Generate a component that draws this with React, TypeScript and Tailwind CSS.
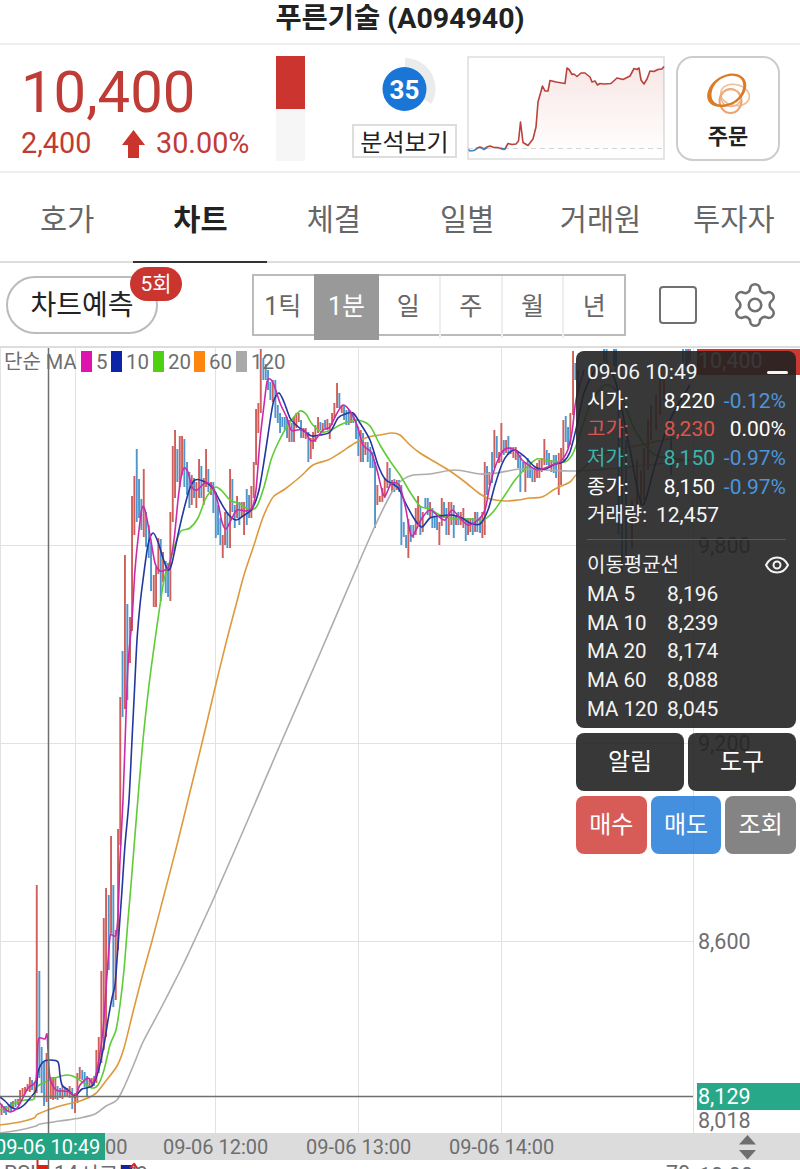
import { ReactNode } from "react";
import clsx from "clsx";
import { Settings } from "lucide-react";

type Point = [number, number];
type Candle = [x: number, high: number, low: number, up: 0 | 1];

const UP = "#cf5f5b";
const DOWN = "#4f96cd";

const tabs = ["호가", "차트", "체결", "일별", "거래원", "투자자"];
const periods = ["1틱", "1분", "일", "주", "월", "년"];

const legend = [
  { label: "5", x: 81, color: "#dd14b0" },
  { label: "10", x: 111, color: "#0b24a8" },
  { label: "20", x: 153, color: "#4fd012" },
  { label: "60", x: 194, color: "#ff860d" },
  { label: "120", x: 236, color: "#a9a9a9" },
];

const quotes = [
  { label: "시가:", value: "8,220", rate: "-0.12%", color: "text-white", rateColor: "text-[#4b95dc]" },
  { label: "고가:", value: "8,230", rate: "0.00%", color: "text-[#dc5650]", rateColor: "text-white" },
  { label: "저가:", value: "8,150", rate: "-0.97%", color: "text-[#3cb4ae]", rateColor: "text-[#4b95dc]" },
  { label: "종가:", value: "8,150", rate: "-0.97%", color: "text-white", rateColor: "text-[#4b95dc]" },
];

const averages = [
  ["MA 5", "8,196"],
  ["MA 10", "8,239"],
  ["MA 20", "8,174"],
  ["MA 60", "8,088"],
  ["MA 120", "8,045"],
];

const candles: Candle[] = [
  [1.5, 1104, 1115, 1], [4, 1106, 1113, 0], [6, 1106, 1115, 0], [8.5, 1104, 1112, 1], [11, 1102, 1111, 0],
  [13, 1101, 1108, 1], [15.5, 1099, 1107, 0], [18, 1099, 1105, 1], [20, 1090, 1103, 1], [22.5, 1088, 1097, 1],
  [25, 1087, 1093, 1], [27.5, 1084, 1091, 1], [29.8, 1077, 1092, 1], [32, 1080, 1090, 0], [34.5, 1082, 1092, 1],
  [36.7, 885, 1093, 1], [39.3, 971, 1078, 0], [41.6, 1047, 1093, 0], [44, 1062, 1106, 0], [46.5, 1053, 1102, 1],
  [50.7, 1077, 1099, 1], [53, 1077, 1100, 1], [55.3, 1077, 1099, 1], [57.5, 1086, 1100, 0], [60, 1088, 1098, 0],
  [62.4, 1086, 1099, 1], [64.8, 1087, 1096, 0], [67.2, 1088, 1097, 1], [69.6, 1086, 1098, 1], [72.2, 1088, 1109, 0],
  [75, 1093, 1113, 1], [77.3, 1073, 1103, 1], [79.7, 1067, 1079, 1], [82.2, 1070, 1080, 0], [84.6, 1072, 1087, 0],
  [87, 1076, 1096, 0], [89.4, 1078, 1088, 1], [91.7, 1078, 1087, 1], [94, 1076, 1086, 0], [96.3, 1050, 1083, 1],
  [98.7, 1037, 1073, 1], [101.3, 971, 1063, 1], [103.7, 918, 1050, 1], [106, 888, 1037, 1], [108.7, 895, 970, 0],
  [111, 836, 933, 1], [113.3, 885, 1007, 0], [115.7, 930, 1000, 1], [118, 829, 950, 1], [120.2, 697, 845, 1],
  [122.5, 651, 717, 0], [124.9, 555, 709, 1], [127.3, 604, 700, 0], [130, 617, 663, 1], [132, 496, 631, 1],
  [134.3, 476, 535, 1], [136.7, 449, 522, 0], [139, 479, 518, 0], [141.3, 499, 530, 0], [143.7, 469, 537, 1],
  [146, 512, 547, 0], [148.7, 525, 558, 0], [151, 542, 591, 0], [153.7, 575, 607, 1], [156, 567, 607, 1],
  [158.3, 538, 574, 1], [160.7, 539, 601, 0], [163, 552, 582, 1], [165.7, 561, 593, 0], [168, 563, 597, 0],
  [170.3, 512, 601, 1], [172.7, 446, 522, 1], [175, 430, 498, 1], [177.3, 449, 482, 0], [179.7, 436, 487, 1],
  [182, 436, 475, 1], [184.3, 439, 487, 0], [187, 462, 495, 0], [189.3, 472, 508, 0], [191.7, 475, 505, 1],
  [194, 478, 498, 0], [196.3, 482, 508, 1], [199, 459, 498, 1], [201.3, 466, 498, 0], [203.7, 478, 505, 1],
  [206, 449, 487, 1], [208.3, 469, 492, 0], [211, 482, 495, 1], [213.3, 482, 513, 0], [215.7, 492, 538, 0],
  [218, 505, 535, 0], [220.3, 518, 545, 0], [222.7, 535, 558, 1], [225, 512, 545, 1], [227.3, 512, 548, 0],
  [230, 469, 548, 1], [232.3, 479, 512, 0], [234.7, 505, 528, 0], [237, 496, 518, 1], [239.3, 502, 525, 0],
  [241.7, 502, 517, 1], [244, 502, 535, 1], [246.7, 489, 525, 0], [249, 495, 518, 0], [251.3, 486, 518, 1],
  [253.7, 462, 498, 1], [256, 409, 465, 1], [258.3, 403, 433, 1], [260.7, 349, 413, 1], [263.3, 358, 380, 0],
  [265.7, 364, 380, 0], [268, 370, 390, 0], [270.3, 382, 400, 0], [272.7, 380, 402, 1], [275.3, 380, 418, 0],
  [277.7, 405, 423, 0], [280, 413, 433, 0], [282.3, 417, 427, 0], [284.7, 417, 430, 0], [287, 417, 438, 0],
  [289.3, 420, 442, 1], [291.7, 423, 442, 0], [294, 417, 442, 1], [296.3, 413, 428, 1], [298.7, 413, 422, 1],
  [301, 420, 438, 0], [303.3, 428, 438, 1], [305.7, 428, 439, 1], [308.3, 432, 462, 0], [310.7, 438, 459, 1],
  [313, 432, 449, 1], [315.3, 425, 442, 1], [318, 417, 433, 1], [320.3, 422, 430, 0], [322.7, 423, 432, 1],
  [325, 420, 428, 0], [327.3, 419, 430, 1], [329.7, 423, 439, 1], [332, 413, 425, 1], [334.3, 403, 418, 1],
  [337, 383, 408, 1], [339.3, 393, 408, 0], [341.7, 405, 413, 1], [344, 405, 420, 0], [346.3, 410, 425, 0],
  [348.7, 410, 425, 0], [351, 413, 423, 1], [353.3, 413, 423, 0], [356, 420, 439, 0], [358.3, 427, 456, 0],
  [360.7, 430, 462, 1], [363, 433, 462, 0], [365.3, 442, 455, 1], [367.7, 442, 462, 0], [370.3, 447, 468, 0],
  [372.7, 452, 468, 0], [375, 462, 528, 0], [377.3, 485, 505, 1], [379.7, 496, 502, 1], [382.3, 488, 502, 1],
  [384.7, 478, 498, 1], [387.3, 462, 488, 1], [389.7, 468, 485, 0], [392, 480, 492, 1], [394.3, 479, 492, 0],
  [396.7, 480, 490, 1], [399, 480, 492, 0], [401.3, 485, 545, 0], [403.7, 522, 537, 0], [406, 535, 548, 0],
  [408.3, 519, 558, 1], [410.7, 525, 542, 0], [413.3, 525, 538, 0], [415.7, 508, 535, 1], [418, 496, 525, 1],
  [420.3, 506, 535, 0], [422.7, 512, 532, 1], [425.3, 498, 508, 0], [427.7, 498, 515, 0], [430, 502, 517, 1],
  [432.3, 508, 528, 0], [434.7, 517, 528, 0], [437, 515, 530, 0], [439.3, 522, 545, 1], [441.7, 498, 526, 1],
  [444, 502, 518, 0], [446.3, 508, 535, 0], [448.7, 502, 535, 1], [451.3, 502, 525, 1], [453.7, 505, 538, 0],
  [456, 515, 525, 1], [458.3, 512, 525, 0], [460.7, 512, 525, 1], [463.3, 508, 528, 1], [465.7, 518, 541, 0],
  [468, 518, 535, 1], [470.3, 518, 532, 1], [472.7, 518, 535, 0], [475, 512, 532, 1], [477.3, 512, 532, 0],
  [480, 518, 533, 0], [482.3, 512, 538, 1], [484.7, 462, 535, 1], [487, 466, 495, 0], [489.3, 472, 485, 1],
  [492, 452, 483, 0], [494.3, 430, 468, 1], [496.7, 436, 458, 0], [499, 452, 463, 1], [501.3, 423, 462, 1],
  [503.7, 440, 455, 0], [506, 440, 453, 1], [508.3, 436, 455, 0], [510.7, 447, 454, 0], [513.3, 447, 458, 1],
  [515.7, 447, 460, 1], [518, 452, 468, 0], [520.3, 455, 492, 0], [523, 462, 472, 0], [525.3, 462, 492, 1],
  [527.7, 458, 478, 0], [530, 463, 478, 0], [532.3, 468, 482, 0], [534.7, 468, 482, 1], [537, 463, 478, 1],
  [539.3, 460, 478, 1], [541.7, 458, 472, 1], [544.3, 439, 465, 1], [546.7, 450, 465, 0], [549, 453, 468, 0],
  [551.3, 460, 472, 1], [553.7, 455, 473, 0], [556, 455, 478, 0], [558.7, 453, 495, 1], [561, 448, 485, 1],
  [563.3, 420, 462, 1], [565.7, 416, 442, 0], [568, 427, 448, 0], [570.3, 413, 445, 1], [573, 351, 415, 1],
  [575.3, 363, 380, 0], [578, 370, 392, 0], [604, 349, 362, 0], [606.5, 349, 364, 0], [614, 349, 366, 0],
  [616, 349, 372, 0], [618.5, 400, 535, 0], [622, 420, 572, 0], [626, 440, 560, 0], [632, 500, 548, 1],
  [637, 460, 512, 1], [641, 470, 505, 1], [644, 448, 500, 1], [648, 420, 470, 1], [651, 405, 440, 1],
  [656, 395, 430, 1], [660, 375, 415, 1], [664, 380, 400, 1], [671, 420, 475, 0], [683, 349, 362, 0],
  [686, 349, 366, 0], [688, 349, 370, 1], [690, 349, 362, 0],
];

const ma5: Point[] = [
  [0, 1103], [4, 1108], [10, 1112], [18, 1107], [28, 1088], [36, 1080], [38, 1042], [41, 1038], [45, 1039], [47, 1034],
  [48, 1050], [50, 1078], [56, 1090], [63, 1091], [70, 1092], [75, 1097], [80, 1085], [88, 1078], [93, 1083], [98, 1065],
  [103, 1030], [107, 975], [110, 937], [112, 935], [116, 935], [118, 915], [120, 860], [123, 800], [125.5, 730], [128, 665],
  [132, 620], [135, 570], [139, 530], [142, 508], [145, 510], [150, 535], [155, 563], [160, 571], [165, 570], [169, 566],
  [174, 540], [178, 500], [181, 478], [184, 468], [188, 472], [192, 487], [197, 490], [205, 483], [212, 486], [218, 503],
  [222, 522], [226, 529], [231, 520], [237, 510], [245, 511], [252, 508], [256, 490], [260, 440], [264, 405], [267, 382],
  [270, 379], [274, 385], [280, 403], [287, 418], [291, 430], [297, 430], [304, 430], [310, 440], [315, 440], [323, 430],
  [330, 427], [336, 415], [343, 405], [350, 411], [357, 425], [363, 445], [371, 452], [377, 470], [384, 496], [391, 484],
  [399, 485], [405, 505], [411, 535], [416, 530], [422, 518], [430, 510], [438, 516], [445, 520], [452, 510], [460, 518],
  [468, 525], [478, 520], [485, 510], [490, 485], [497, 462], [505, 449], [515, 450], [522, 460], [530, 466], [537, 470],
  [545, 468], [555, 464], [560, 462], [567, 452], [572, 432], [576, 400], [584, 370],
];

const ma10: Point[] = [
  [0, 1097], [5, 1101], [11, 1107], [17, 1109], [24, 1105], [31, 1097], [36, 1090], [38, 1072], [43, 1062], [50, 1060],
  [58, 1062], [60, 1075], [62, 1085], [68, 1090], [75, 1096], [82, 1089], [92, 1086], [98, 1072], [104, 1045], [108, 1020],
  [112, 998], [115, 985], [117, 960], [119.5, 925], [122, 890], [125, 845], [129, 800], [132, 740], [134.5, 690], [137, 640],
  [140, 605], [143, 580], [148, 545], [153, 533], [158, 542], [163, 558], [168, 570], [172, 563], [179, 530], [185, 505],
  [190, 488], [195, 480], [203, 481], [212, 487], [220, 501], [228, 514], [236, 520], [243, 516], [252, 509], [259, 490],
  [265, 455], [271, 415], [274, 400], [279, 393], [284, 402], [290, 418], [296, 425], [304, 431], [312, 436], [320, 435],
  [330, 432], [338, 418], [345, 414], [353, 413], [360, 423], [370, 440], [378, 465], [385, 479], [393, 484], [399, 489],
  [406, 504], [415, 520], [422, 527], [430, 518], [440, 516], [452, 515], [462, 518], [470, 523], [480, 524], [488, 510],
  [495, 485], [502, 464], [508, 454], [515, 450], [525, 457], [535, 467], [545, 469], [555, 464], [563, 462], [570, 452],
  [577, 425], [585, 390], [600, 365], [615, 380], [630, 450], [642, 505], [655, 465], [670, 420], [690, 385],
];

const ma20: Point[] = [
  [0, 1110], [10, 1107], [15, 1103], [25, 1100], [34, 1099], [36, 1088], [43, 1083], [55, 1078], [67, 1075], [75, 1077],
  [85, 1084], [92, 1088], [98, 1085], [104, 1070], [110, 1045], [116, 1030], [120, 1005], [124, 970], [128, 920], [131, 885],
  [137, 810], [143, 740], [149, 685], [155, 640], [160, 605], [164, 580], [169, 564], [176, 542], [181, 531], [190, 528],
  [198, 518], [205, 500], [210, 492], [216, 487], [222, 491], [230, 500], [240, 504], [250, 510], [257, 506], [264, 487],
  [271, 460], [278, 443], [286, 428], [293, 418], [300, 411], [306, 414], [312, 424], [322, 432], [331, 430], [340, 425],
  [348, 422], [358, 420], [370, 426], [380, 445], [390, 461], [400, 475], [410, 492], [420, 506], [430, 509], [440, 515],
  [455, 519], [470, 519], [483, 520], [493, 512], [505, 495], [515, 480], [525, 469], [537, 459], [550, 461], [565, 462],
  [572, 455], [577, 443], [590, 405], [605, 385], [620, 395], [635, 430], [655, 455], [690, 460],
];

const ma60: Point[] = [
  [0, 1125], [20, 1122], [34, 1118], [38, 1114], [60, 1106], [80, 1101], [95, 1094], [105, 1082], [117, 1066], [124, 1048],
  [133, 1012], [142, 977], [152, 941], [163, 899], [177, 845], [188, 800], [202, 743], [215, 688], [226, 643], [236, 605],
  [244, 575], [254, 545], [262, 520], [268, 506], [274, 496], [285, 489], [300, 477], [313, 465], [328, 460],
  [340, 453], [355, 443], [368, 437], [380, 435], [392, 433], [400, 435], [410, 445], [420, 453], [435, 462], [450, 471],
  [465, 482], [480, 494], [490, 499], [505, 501], [518, 500], [530, 498], [542, 497], [555, 489], [570, 482], [577, 474],
  [600, 455], [640, 445], [690, 435],
];

const ma120: Point[] = [
  [0, 1133], [20, 1130], [36, 1126], [40, 1124], [60, 1121], [80, 1118], [95, 1114], [106, 1106], [117, 1100], [125, 1085],
  [134, 1064], [143, 1042], [160, 1010], [180, 971], [190, 950], [213, 900], [247, 822], [280, 745], [318, 658], [354, 574],
  [375, 526], [392, 492], [402, 480], [413, 475], [430, 474], [455, 470], [480, 474], [497, 473], [520, 469], [545, 470],
  [575, 471], [620, 468], [690, 460],
];

const lines = [
  { points: ma120, color: "#adadad" },
  { points: ma60, color: "#dd9a3c" },
  { points: ma20, color: "#5fcb35" },
  { points: ma10, color: "#22379f" },
  { points: ma5, color: "#cb2bab" },
];

// Catmull-Rom spline through all points
const smooth = (p: Point[]) =>
  p.reduce((d, [x, y], i) => {
    if (i === 0) return `M${x} ${y}`;
    const a = p[i - 2] ?? p[i - 1];
    const b = p[i - 1];
    const c = p[i + 1] ?? p[i];
    return `${d}C${b[0] + (x - a[0]) / 7} ${b[1] + (y - a[1]) / 7} ${x - (c[0] - b[0]) / 7} ${y - (c[1] - b[1]) / 7} ${x} ${y}`;
  }, "");

const ScoreGauge = () => (
  <svg width="64" height="62" viewBox="0 0 64 62">
    <path d="M32 5.500A26 26 0 0 1 54.500 44.500" fill="none" stroke="#ebebeb" strokeWidth="9" />
    <circle cx="31.500" cy="32" r="22" fill="#1976d7" />
    <text x="31.500" y="42" textAnchor="middle" fontSize="26" fontWeight="700" fill="#fff">
      35
    </text>
  </svg>
);

const Sparkline = () => (
  <svg width="198" height="104" viewBox="467 56 198 104">
    <defs>
      <linearGradient id="spark" x1="0" y1="0" x2="0" y2="1">
        <stop offset="0" stopColor="#c0392f" stopOpacity="0.12" />
        <stop offset="1" stopColor="#c0392f" stopOpacity="0.01" />
      </linearGradient>
    </defs>
    <rect x="468" y="57" width="196" height="102" fill="#fff" stroke="#ddd" strokeWidth="1.500" />
    <path
      d="M505 149L508 143L519 143L520.500 122L523 142L528 145L533 139L536 127L538 102L542.500 86L545 91H548L551 81L565 83.500L567 68L572 74L577 76L583 72L588 75L593 82L598 85L610 83L618 78L625 79L631 74L634 69L639 68L641 80L644 84L650 72L654 69L661 68L664 66V149Z"
      fill="url(#spark)"
    />
    <path d="M468 148.500H664" stroke="#d5d5d5" strokeDasharray="5 4" />
    <path
      d="M476 148.500L480 147L484 149L487 147L490 146L494 147.500L498 147.500L502 149L505 149L508 143.500L512 144.500L516 144L518.500 141L520.500 122L523 142.500L528 145.500L533 139L536 127L538 102L542.500 86L545 91H548L550 80.500L556 82L565 83.500L567 68L569 69.500L572 74.500L574 74L577 76.500L581 73L585 73L590 77L592 82L595 81L597.500 85L600 83.500L604 84L611 83.500L617 78L623 79.500L630 76L634 68.500L637 69.500L639 68L641 80L644 84L647 79L650 71L654 71.500L658 69.500L662 69L664 66.500"
      fill="none"
      stroke="#b9423c"
      strokeWidth="1.600"
      strokeLinejoin="round"
    />
    <path
      d="M468.500 149.500L470 151L474 150.500L477 148.500M481 147.500L484 149.500L487 147.500M501 148L504 149.500L506 147.500"
      fill="none"
      stroke="#3e84bd"
      strokeWidth="1.600"
    />
  </svg>
);

const OrderLogo = () => (
  <svg width="46" height="42" viewBox="0 0 46 42">
    <g fill="none">
      <ellipse cx="30" cy="22" rx="14.500" ry="10.500" stroke="#f0bd97" strokeWidth="1.600" transform="rotate(12 30 22)" />
      <ellipse cx="25.500" cy="28" rx="11" ry="12" stroke="#eaa473" strokeWidth="2" />
      <ellipse cx="26" cy="25" rx="10" ry="8.500" stroke="#efb084" strokeWidth="1.400" />
    </g>
    <path
      fillRule="evenodd"
      fill="#dc7b27"
      d="M23 1C34-1 43 5 41 15C39 26 28 34 16 34C5 34 0 27 3 18C6 9 14 3 23 1ZM25 3C16 4 9 10 7 18C5 26 9 31.500 17 31.500C27 31.500 36 25 38 15C39.500 7 34 2 25 3Z"
    />
  </svg>
);

const PriceChart = () => (
  <svg className="block" width="800" height="821" viewBox="0 348 800 821" fontSize="21.500" fill="#6e6e6e">
    <g stroke="#e2e2e2">
      {[0.5, 75.5, 215.5, 358.5, 501.5, 693.5].map((x) => (
        <path key={x} d={`M${x} 348V1133`} />
      ))}
      {[545.5, 743.5, 941.5].map((y) => (
        <path key={y} d={`M0 ${y}H693`} />
      ))}
    </g>

    {candles.map(([x, high, low, up]) => (
      <rect key={x} x={x - 0.9} y={high} width="1.900" height={low - high} fill={up ? UP : DOWN} />
    ))}
    {lines.map(({ points, color }) => (
      <path key={color} d={smooth(points)} fill="none" stroke={color} strokeWidth="1.600" />
    ))}

    <g fontSize="20">
      <text x="4" y="369">단순 MA</text>
      {legend.map(({ label, x, color }) => (
        <g key={label}>
          <rect x={x} y="351" width="11" height="21" fill={color} />
          <text x={x + 15} y="369" fontSize="20.500">{label}</text>
        </g>
      ))}
    </g>

    <text x="698" y="553">9,800</text>
    <text x="698" y="751">9,200</text>
    <text x="698" y="949">8,600</text>
    <text x="698" y="1128">8,018</text>
    <rect x="697" y="349" width="103" height="26" fill="#cb3a34" />
    <text x="698" y="368" fill="#fff">10,400</text>

    <rect y="1133" width="800" height="27" fill="#dcdcdc" />
    <g fontSize="20">
      <text x="105" y="1154">00</text>
      <text x="163" y="1154">09-06 12:00</text>
      <text x="306" y="1154">09-06 13:00</text>
      <text x="449" y="1154">09-06 14:00</text>
    </g>
    <path d="M739 1144.500L747.500 1135L756 1144.500ZM739 1150L747.500 1159.500L756 1150Z" />

    {/* next indicator pane, only its first pixels are in view */}
    <text x="4" y="1181">RSI</text>
    <rect x="38" y="1165" width="11" height="4" fill="#e0200f" />
    <path d="M37.500 1160V1169" stroke="#cf2a20" strokeWidth="2" />
    <text x="54" y="1181">14</text>
    <text x="79" y="1182">시그널</text>
    <rect x="121" y="1165" width="11" height="4" fill="#0b24a8" />
    <path d="M130 1168L134 1164L138 1169" fill="none" stroke="#d0242f" strokeWidth="2" />
    <text x="136" y="1182">9</text>
    <text x="666" y="1181">70</text>
    <text x="699" y="1183">10.00</text>

    <g stroke="#6f6f6f" strokeWidth="1.500">
      <path d="M48.500 348V1169" />
      <path d="M0 1096.500H693" />
    </g>
    <rect x="697" y="1083" width="103" height="27" fill="#27a889" />
    <text x="698" y="1104" fill="#fff">8,129</text>
    <rect y="1133" width="105" height="27" fill="#24a485" />
    <text x="-5" y="1154" fontSize="20" fill="#fff">09-06 10:49</text>
  </svg>
);

const PanelButton = ({ children, className }: { children: ReactNode; className: string }) => (
  <button className={clsx("flex h-[58px] flex-1 items-center justify-center rounded-lg text-2xl text-white", className)}>
    {children}
  </button>
);

const InfoPanel = () => (
  <div className="absolute top-[3px] right-1 flex w-[220px] flex-col gap-[5px]">
    <div className="h-[377px] rounded-lg bg-[#222]/90 pt-[7px] pr-[10px] pl-[11px] text-[21px] leading-[28.7px] text-[#f4f4f4]">
      <div className="flex items-center justify-between">
        <span>09-06 10:49</span>
        <span className="-mr-[2px] h-[3px] w-[21px] rounded-full bg-[#f4f4f4]" />
      </div>
      {quotes.map(({ label, value, rate, color, rateColor }) => (
        <div key={label} className="flex h-[28.7px]">
          <span className={clsx("w-[59px] text-xl leading-[28.7px]", color)}>{label}</span>
          <span className={clsx("w-[69px] text-right", color)}>{value}</span>
          <span className={clsx("flex-1 text-right", rateColor)}>{rate}</span>
        </div>
      ))}
      <div className="flex h-[28.7px]">
        <span className="w-[69px] text-xl leading-[28.7px]">거래량:</span>
        <span>12,457</span>
      </div>
      <div className="mt-[9px] mb-[11px] h-px bg-[#5a5a5a]" />
      <div className="flex h-[28.7px] items-center justify-between">
        <span className="text-xl leading-[28.7px]">이동평균선</span>
        <svg className="-mr-1" width="26" height="20" viewBox="0 0 26 20" fill="none" stroke="#f4f4f4" strokeWidth="2">
          <path d="M2 10C7 0 19 0 24 10C19 20 7 20 2 10Z" />
          <circle cx="13" cy="10" r="3.500" />
        </svg>
      </div>
      {averages.map(([label, value]) => (
        <div key={label} className="flex h-[28.7px]">
          <span className="w-20 text-[20.5px] leading-[28.7px]">{label}</span>
          <span>{value}</span>
        </div>
      ))}
    </div>
    <div className="flex gap-1">
      <PanelButton className="bg-[#222]/90">알림</PanelButton>
      <PanelButton className="bg-[#222]/90">도구</PanelButton>
    </div>
    <div className="flex gap-1">
      <PanelButton className="bg-[#cd332d]/80">매수</PanelButton>
      <PanelButton className="bg-[#1573d6]/80">매도</PanelButton>
      <PanelButton className="bg-[#656565]/80">조회</PanelButton>
    </div>
  </div>
);

export default function App() {
  return (
    <div className="h-[1169px] w-[800px] overflow-hidden bg-white font-['Roboto','Noto_Sans_CJK_KR',sans-serif] text-[#222]">
      <header className="flex h-[45px] justify-center border-b-2 border-[#eee]">
        <h1 className="text-[28.5px] leading-[38px] font-bold">푸른기술 (A094940)</h1>
      </header>

      <section className="flex h-32 border-b-2 border-[#eee]">
        <div className="w-[276px] pl-[21px] text-[#bf3b36]">
          <div className="mt-[15px] text-[58px] leading-[64px]">10,400</div>
          <div className="flex items-center text-[28.8px] leading-[39px]">
            <span className="w-[100px]">2,400</span>
            <svg width="25" height="28" viewBox="0 0 25 28" fill="#cb332d">
              <path d="M12.500 0L24 15H18V28H7V15H1Z" />
            </svg>
            <span className="ml-[10px]">30.00%</span>
          </div>
        </div>
        <div className="mt-[11px] h-[105px] w-[29px] bg-[#f6f6f6]">
          <div className="h-[53px] bg-[#cc352f]" />
        </div>
        <div className="ml-[47px] flex w-[105px] flex-col items-center pt-[12px]">
          <ScoreGauge />
          <div className="mt-[5px] h-[34px] w-[105px] border-2 border-[#ddd] text-center text-2xl leading-[35px] whitespace-nowrap">
            분석보기
          </div>
        </div>
        <div className="mt-[11px] ml-[10px]">
          <Sparkline />
        </div>
        <button className="mt-[11px] ml-[11px] flex h-[105px] w-[104px] flex-col items-center rounded-[17px] border-2 border-[#ccc] pt-[15px]">
          <OrderLogo />
          <span className="mt-[5px] text-[22px] leading-[34px] font-bold">주문</span>
        </button>
      </section>

      <nav className="grid h-[90px] grid-cols-6 border-b-2 border-[#ddd]">
        {tabs.map((tab) => (
          <div
            key={tab}
            className={clsx(
              "-mb-[2px] pt-[25px] pl-[1px] text-center text-[29.5px] leading-[44px]",
              tab === "차트" ? "border-b-2 border-[#333] font-bold" : "text-[#666]",
            )}
          >
            {tab}
          </div>
        ))}
      </nav>

      <div className="flex h-[85px] items-start border-b-2 border-[#ddd]">
        <div className="relative mt-[13px] ml-[6px] h-[58px] w-[152px] rounded-full border-2 border-[#bbb] text-center text-[28px] leading-[56px]">
          차트예측
          <span className="absolute -top-[11px] -right-[26px] h-[34px] w-[52px] rounded-full bg-[#cb352f] text-[21px] leading-[35px] text-white">
            5회
          </span>
        </div>
        <div className="mt-[11px] ml-[94px] grid h-[62px] w-[374px] grid-cols-6 border-2 border-[#bbb]">
          {periods.map((period, i) => (
            <div
              key={period}
              className={clsx(
                "text-center text-[25px] leading-[62px]",
                period === "1틱" && "-ml-1",
                period === "1분" ? "-my-[2px] -mr-[2px] -ml-[2px] bg-[#999] leading-[66px] text-white" : "text-[#666]",
                i > 2 && "border-l-2 border-[#eee]",
              )}
            >
              {period}
            </div>
          ))}
        </div>
        <div className="mt-[23px] ml-[33px] size-[38px] rounded-[4px] border-[2.5px] border-[#707070]" />
        <Settings className="mt-[17px] ml-[33px] text-[#707070]" size={50} strokeWidth={1.25} />
      </div>

      <main className="relative">
        <PriceChart />
        <InfoPanel />
      </main>
    </div>
  );
}
